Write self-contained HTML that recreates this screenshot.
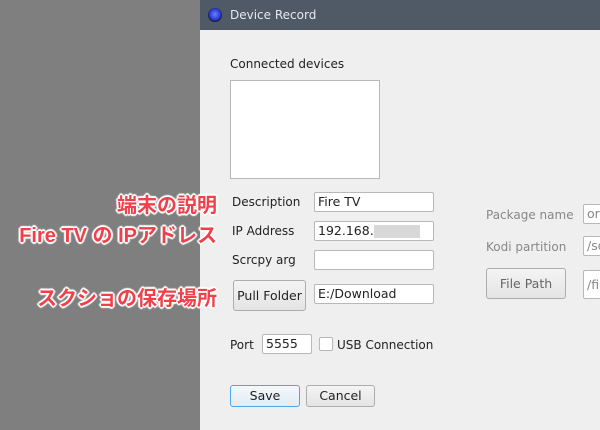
<!DOCTYPE html>
<html><head><meta charset="utf-8"><style>
*{margin:0;padding:0;box-sizing:border-box}
body{width:600px;height:430px;overflow:hidden;background:#7f7f7f;position:relative;font-family:"DejaVu Sans","Liberation Sans",sans-serif;font-size:12px;color:#222}
.a{position:absolute;white-space:nowrap}
#dlg{position:absolute;left:200px;top:0;width:400px;height:430px;background:#efefef}
#tb{position:absolute;left:200px;top:0;width:400px;height:30px;background:#4f5a66}
.f{position:absolute;background:#fff;border:1px solid #b8b8b8;border-radius:2px;height:20px;padding-left:3px;line-height:18px;font-size:12.5px;overflow:hidden;white-space:nowrap}
.b{position:absolute;border:1px solid #adadad;border-radius:3px;background:linear-gradient(#f4f4f4,#e4e4e4);text-align:center;font-size:12.5px}
.n{position:absolute;white-space:nowrap;right:383px;font-family:"Liberation Sans","Noto Sans CJK JP",sans-serif;font-weight:bold;font-size:20px;color:#f0404a;text-shadow:0 0 2px #fff,1px 1px 1px #fff,-1px -1px 1px #fff,1px -1px 1px #fff,-1px 1px 1px #fff,2px 0 1px #fff,-2px 0 1px #fff,0 2px 1px #fff,0 -2px 1px #fff}
.g{color:#888}
</style></head><body>
<div id="dlg"></div>
<div id="tb"></div>
<div class="a" style="left:208px;top:8px;width:14px;height:14px;border-radius:50%;background:radial-gradient(circle at 50% 45%,#6a80ff 0,#2b3cd8 50%,#111 75%)"></div>
<div class="a" style="left:230px;top:8px;color:#e4eaee;font-size:12px">Device Record</div>
<div class="a" style="left:230px;top:57px;width:115px;overflow:hidden">Connected devices</div>
<div class="a" style="left:230px;top:80px;width:150px;height:99px;background:#fff;border:1px solid #b8b8b8"></div>

<div class="a" style="left:232px;top:195px">Description</div>
<div class="f" style="left:314px;top:192px;width:120px">Fire TV</div>
<div class="a" style="left:232px;top:224px">IP Address</div>
<div class="f" style="left:314px;top:221px;width:120px">192.168.<span style="display:inline-block;width:46px;height:13px;background:#d8d8d8;vertical-align:middle"></span></div>
<div class="a" style="left:232px;top:253px">Scrcpy arg</div>
<div class="f" style="left:314px;top:250px;width:120px"></div>
<div class="b" style="left:233px;top:280px;width:73px;height:31px;line-height:29px">Pull Folder</div>
<div class="f" style="left:314px;top:284px;width:120px">E:/Download</div>

<div class="a g" style="left:486px;top:208px">Package name</div>
<div class="f g" style="left:583px;top:204px;width:30px">org</div>
<div class="a g" style="left:486px;top:240px">Kodi partition</div>
<div class="f g" style="left:583px;top:236px;width:30px">/sd</div>
<div class="b g" style="left:486px;top:268px;width:80px;height:31px;line-height:29px;color:#666">File Path</div>
<div class="f g" style="left:583px;top:270px;width:30px;height:29px;line-height:27px">/fil</div>

<div class="a" style="left:230px;top:338px">Port</div>
<div class="f" style="left:262px;top:334px;width:50px">5555</div>
<div class="a" style="left:319px;top:337px;width:14px;height:14px;background:#fff;border:1px solid #b8b8b8;border-radius:2px"></div>
<div class="a" style="left:337px;top:338px">USB Connection</div>
<div class="b" style="left:230px;top:385px;width:70px;height:22px;line-height:20px;border-color:#4ea6e6;background:linear-gradient(#f4f8fc,#e2ecf4)">Save</div>
<div class="b" style="left:306px;top:385px;width:69px;height:22px;line-height:20px">Cancel</div>

<div class="n" style="top:189px">端末の説明</div>
<div class="n" style="top:219px">Fire TV の IPアドレス</div>
<div class="n" style="top:282px">スクショの保存場所</div>
</body></html>
